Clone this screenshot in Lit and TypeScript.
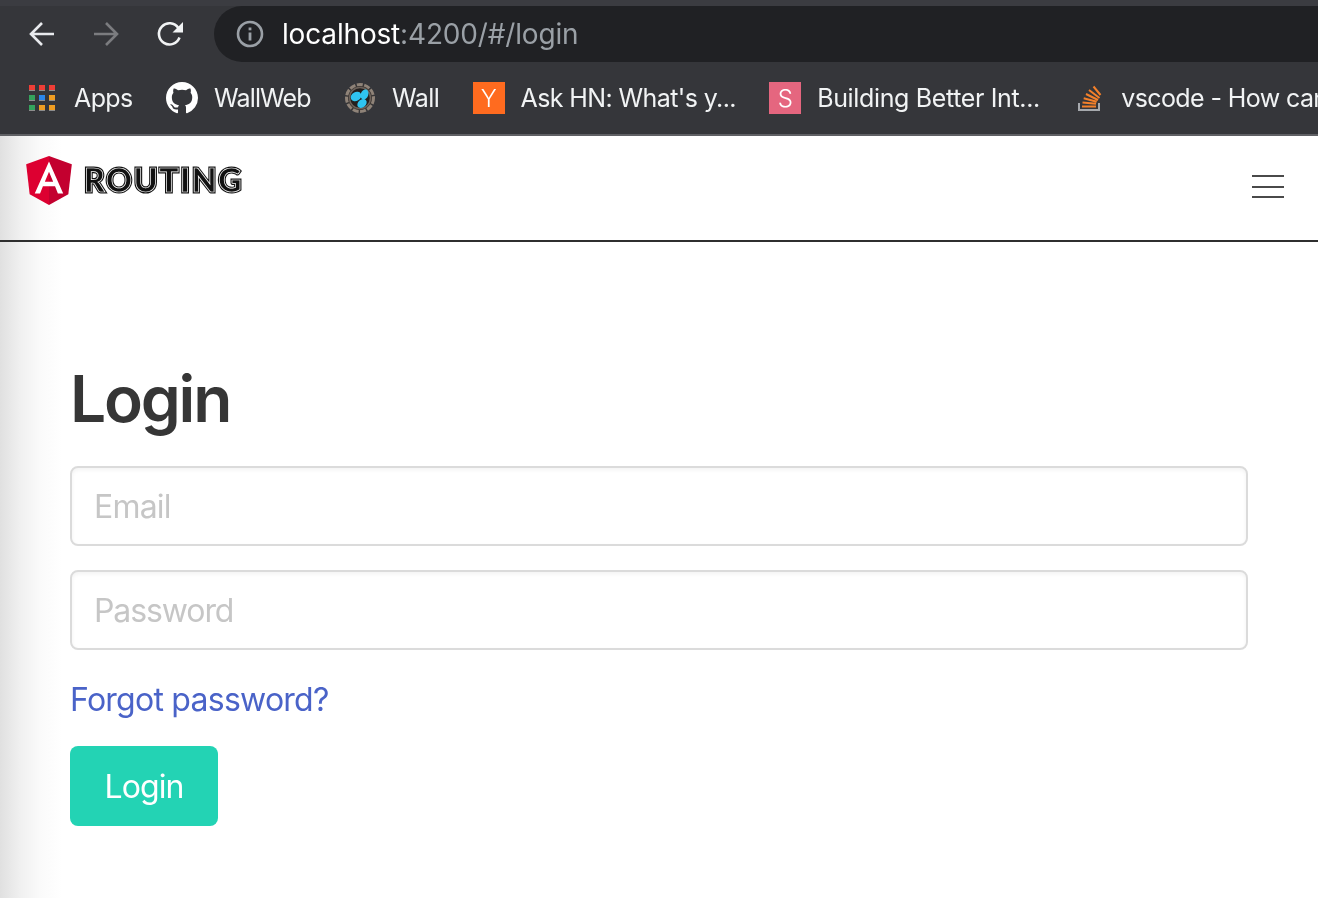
import { LitElement, html, css, svg } from "lit";
import { customElement } from "lit/decorators.js";

const appsColors = ["r", "r", "r", "g", "b", "o", "g", "o", "o"];

const githubPath =
  "M8 0C3.58 0 0 3.58 0 8c0 3.54 2.29 6.53 5.47 7.59.4.07.55-.17.55-.38 0-.19-.01-.82-.01-1.49-2.01.37-2.53-.49-2.69-.94-.09-.23-.48-.94-.82-1.13-.28-.15-.68-.52-.01-.53.63-.01 1.08.58 1.23.82.72 1.21 1.87.87 2.33.66.07-.52.28-.87.51-1.07-1.78-.2-3.64-.89-3.64-3.95 0-.87.31-1.59.82-2.15-.08-.2-.36-1.02.08-2.12 0 0 .67-.21 2.2.82.64-.18 1.32-.27 2-.27s1.36.09 2 .27c1.53-1.04 2.2-.82 2.2-.82.44 1.1.16 1.92.08 2.12.51.56.82 1.27.82 2.15 0 3.07-1.87 3.75-3.65 3.95.29.25.54.73.54 1.48 0 1.07-.01 1.93-.01 2.2 0 .21.15.46.55.38A8.01 8.01 0 0 0 16 8c0-4.42-3.58-8-8-8z";

@customElement("app-root")
export class AppRoot extends LitElement {
  static styles = css`
    :host {
      display: block;
      height: 898px;
      overflow: hidden;
      font-family: Inter, "Liberation Sans", sans-serif;
      background: #fff;
    }

    .chrome {
      background: #35363a;
      color: #fff;
      border-bottom: 2px solid #5f6064;
    }

    .toolbar {
      display: flex;
      align-items: center;
      height: 62px;
      padding-top: 6px;
      box-sizing: border-box;
      background: linear-gradient(#3b3c41 6px, #35363a 6px);
      overflow: hidden;
    }

    .nav-btns {
      display: flex;
      align-items: center;
      gap: 38px;
      padding-left: 29px;
      width: 214px;
      box-sizing: border-box;
      flex: none;
    }

    .nav-btns svg {
      display: block;
      width: 26px;
      height: 26px;
    }

    .url {
      flex: 1;
      margin-right: -40px;
      height: 56px;
      border-radius: 28px;
      background: #202124;
      display: flex;
      align-items: center;
      padding-left: 22px;
      gap: 18px;
      font-size: 28px;
      letter-spacing: -0.17px;
      color: #9aa0a6;
    }

    .url svg {
      width: 28px;
      height: 28px;
      flex: none;
    }

    .url span {
      will-change: opacity;
    }

    .url b {
      font-weight: 400;
      color: #fff;
    }

    .bookmarks {
      display: flex;
      align-items: center;
      height: 72px;
      padding-left: 26px;
      gap: 33.3px;
      font-size: 25px;
      letter-spacing: -0.6px;
      white-space: nowrap;
      overflow: hidden;
      color: #f1f3f4;
      will-change: opacity;
    }

    .mark {
      display: flex;
      align-items: center;
      gap: 16px;
      flex: none;
    }

    .mark.loose {
      letter-spacing: -0.35px;
    }

    .mark.tight {
      letter-spacing: -0.85px;
    }

    .fav {
      width: 32px;
      height: 32px;
      flex: none;
      display: flex;
      align-items: center;
      justify-content: center;
      font-size: 24px;
      font-weight: 300;
      color: #fff;
    }

    .fav svg {
      display: block;
    }

    .apps {
      display: grid;
      grid-template-columns: repeat(3, 6px);
      grid-auto-rows: 6px;
      gap: 4px;
      align-items: stretch;
      align-content: center;
      justify-content: center;
    }

    .apps i {
      display: block;
      box-sizing: border-box;
      border-bottom: 1px solid #8d8d8d;
    }

    .apps .r {
      background: #ef3e36;
    }

    .apps .g {
      background: #34a35c;
    }

    .apps .b {
      background: #2b86ea;
    }

    .apps .o {
      background: #ef9d22;
    }

    .yc {
      background: #ff6b1f;
    }

    .sm {
      background: #e5667f;
    }

    .page {
      height: 762px;
      background: linear-gradient(90deg, #e0e0e0 0, #f0f0f0 20px, #fafafa 40px, #fff 62px);
    }

    .navbar {
      display: flex;
      align-items: center;
      justify-content: space-between;
      height: 104px;
      border-bottom: 2px solid #2f2f2f;
      padding: 0 34px 0 26px;
    }

    .brand {
      display: flex;
      align-items: center;
      gap: 12px;
      margin-top: -16px;
    }

    .brand svg {
      display: block;
      width: 46px;
      height: 49px;
    }

    .word {
      position: relative;
      will-change: opacity;
      font: 900 32px/36px Lato, "Liberation Sans", sans-serif;
      letter-spacing: 1.7px;
      color: #111;
      -webkit-text-stroke: 3px #111;
    }

    .word::after {
      content: "ROUTING";
      position: absolute;
      left: 0;
      top: 0;
      color: #111;
      -webkit-text-stroke: 0.7px #fff;
    }

    .burger {
      display: grid;
      gap: 8.5px;
      width: 32px;
      margin-top: -3px;
    }

    .burger i {
      display: block;
      height: 2px;
      background: #4a4a4a;
    }

    main {
      padding: 121px 70px 0;
      will-change: opacity;
    }

    h1 {
      margin: 0 0 31px;
      font-size: 64px;
      line-height: 72px;
      font-weight: 600;
      letter-spacing: -2.2px;
      color: #363636;
    }

    input {
      display: block;
      width: 100%;
      height: 80px;
      box-sizing: border-box;
      margin-bottom: 24px;
      padding: 0 22px;
      border: 2px solid #dbdbdb;
      border-radius: 8px;
      box-shadow: inset 0 2px 4px rgba(10, 10, 10, 0.05);
      background: #fff;
      font: 400 32px Inter, "Liberation Sans", sans-serif;
      letter-spacing: -0.8px;
      outline: none;
    }

    input.pw {
      letter-spacing: -1.1px;
    }

    input::placeholder {
      color: #c6c6c6;
    }

    .forgot {
      display: block;
      width: max-content;
      margin-top: 26px;
      font-size: 32px;
      line-height: 48px;
      letter-spacing: -0.75px;
      color: #4a63c8;
      text-decoration: none;
    }

    button {
      display: block;
      width: 148px;
      height: 80px;
      margin-top: 22px;
      border: none;
      border-radius: 8px;
      background: #23d3b4;
      color: #fff;
      font: 400 32px Inter, "Liberation Sans", sans-serif;
      letter-spacing: -0.9px;
    }
  `;

  renderNest() {
    return svg`<svg viewBox="0 0 32 32" width="32" height="32">
      <circle cx="16" cy="16" r="13.5" fill="#3a3634" stroke="#8f8378" stroke-width="3" stroke-dasharray="6 1.5"/>
      <circle cx="16" cy="16" r="10.5" fill="#23201f" stroke="#6d625a" stroke-width="1.5"/>
      <ellipse cx="12" cy="14.5" rx="5.6" ry="4.4" fill="#2fc4f0" transform="rotate(-30 12 14.5)"/>
      <ellipse cx="20.5" cy="12.5" rx="3.8" ry="5.2" fill="#2fc4f0" transform="rotate(20 20.5 12.5)"/>
      <ellipse cx="18" cy="21.5" rx="5.2" ry="3.8" fill="#2fc4f0" transform="rotate(-40 18 21.5)"/>
    </svg>`;
  }

  render() {
    return html`
      <div class="chrome">
        <div class="toolbar">
          <div class="nav-btns">
            <svg viewBox="0 0 26 26" fill="none" stroke="#e8eaed" stroke-width="2.6">
              <path d="M25 13H2M13 2 2 13l11 11" />
            </svg>
            <svg viewBox="0 0 26 26" fill="none" stroke="#7b7c7f" stroke-width="2.6">
              <path d="M1 13h23M13 2l11 11-11 11" />
            </svg>
            <svg viewBox="0 0 26 26" fill="none" stroke="#f1f3f4" stroke-width="2.6">
              <path d="M22.5 16.5a10.6 10.6 0 1 1-1.2-9.6" />
              <path d="M26 1v10.5H15.5z" fill="#f1f3f4" stroke="none" />
            </svg>
          </div>
          <div class="url">
            <svg viewBox="0 0 28 28" fill="none">
              <circle cx="14" cy="14" r="12" stroke="#9aa0a6" stroke-width="2.6" />
              <rect x="12.6" y="12.5" width="2.8" height="8" fill="#9aa0a6" />
              <rect x="12.6" y="7.5" width="2.8" height="2.8" fill="#9aa0a6" />
            </svg>
            <span><b>localhost</b>:4200/#/login</span>
          </div>
        </div>
        <div class="bookmarks">
          <div class="mark">
            <span class="fav apps">${appsColors.map((c) => html`<i class=${c}></i>`)}</span>
            Apps
          </div>
          <div class="mark tight">
            <span class="fav">
              <svg viewBox="0 0 16 16" width="32" height="32"><path fill="#fff" d=${githubPath} /></svg>
            </span>
            WallWeb
          </div>
          <div class="mark"><span class="fav">${this.renderNest()}</span>Wall</div>
          <div class="mark"><span class="fav yc">Y</span>Ask HN: What's y...</div>
          <div class="mark loose"><span class="fav sm">S</span>Building Better Int...</div>
          <div class="mark">
            <span class="fav">
              <svg viewBox="0 0 32 32" width="32" height="32" fill="none">
                <path d="M6 21v7h20v-7" stroke="#a6a9ad" stroke-width="2" />
                <path d="M9 24.5h14M9.5 20.5l13.5 1.2M10.7 16.3l13 3.4M13 12l12 6M16 8l10.5 8M20.5 4.5l7 8.5" stroke="#f4802a" stroke-width="2" />
              </svg>
            </span>
            vscode - How can I change
          </div>
        </div>
      </div>
      <div class="page">
        <header class="navbar">
          <div class="brand">
            <svg viewBox="31.9 30 186.2 200">
              <polygon fill="#dd0031" points="125,30 31.9,63.2 46.1,186.3 125,230" />
              <polygon fill="#c3002f" points="125,30 125,230 203.9,186.3 218.1,63.2" />
              <path fill="#fff" d="M125 52.1 66.8 182.6h21.7l11.7-29.2h49.4l11.7 29.2h21.7L125 52.1zM142 135.4h-34l17-40.9 17 40.9z" />
            </svg>
            <span class="word">ROUTING</span>
          </div>
          <div class="burger"><i></i><i></i><i></i></div>
        </header>
        <main>
          <h1>Login</h1>
          <input type="email" placeholder="Email" />
          <input class="pw" type="password" placeholder="Password" />
          <a class="forgot" href="#">Forgot password?</a>
          <button>Login</button>
        </main>
      </div>
    `;
  }
}
